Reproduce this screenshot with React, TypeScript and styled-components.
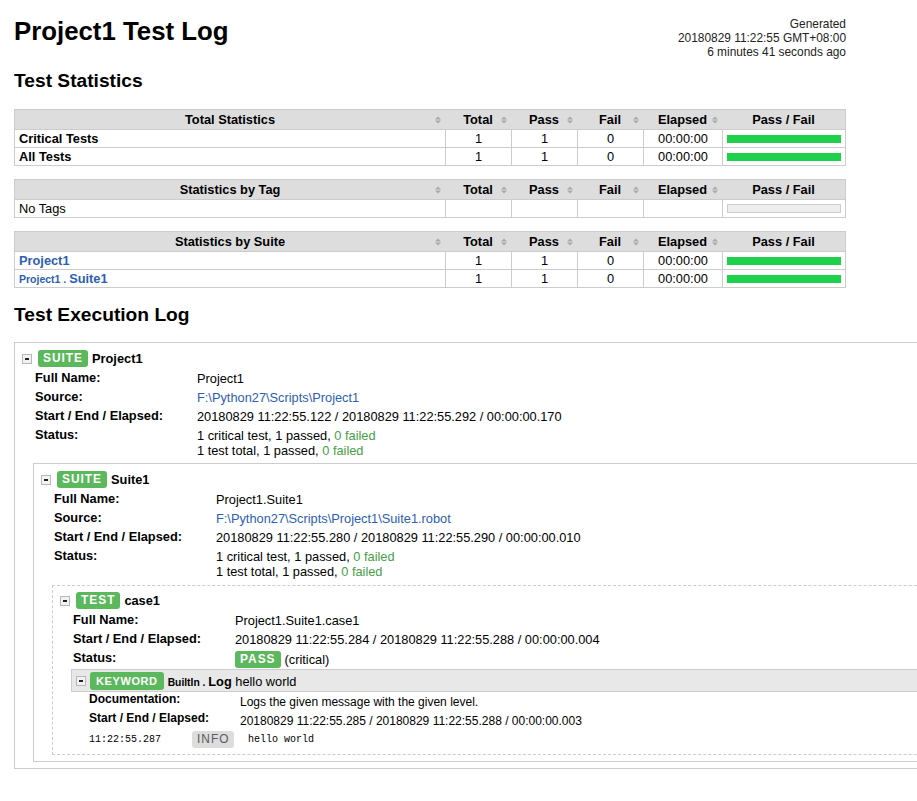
import styled, { createGlobalStyle } from "styled-components";

const GlobalStyle = createGlobalStyle`
  html, body {
    margin: 0;
    padding: 0;
    background: #fff;
    overflow-x: hidden;
  }
  body {
    font-family: "Liberation Sans", Arial, Helvetica, sans-serif;
    font-size: 12.8px;
    color: #000;
  }
`;

const COLS = "430px 66px 66px 66px 79px 123px";

const Page = styled.div`
  padding: 16px 0 0 14px;
`;

const Header = styled.header`
  width: 832px;
  display: flex;
  justify-content: space-between;
  align-items: flex-start;
`;

const Title = styled.h1`
  margin: 0;
  font-size: 25.8px;
  line-height: 30px;
  font-weight: bold;
`;

const Generated = styled.div`
  margin-top: 1px;
  text-align: right;
  font-size: 11.9px;
  line-height: 14px;
  color: #222;
`;

const SectionTitle = styled.h2<{ $top: number; $bottom: number }>`
  margin: ${(p) => p.$top}px 0 ${(p) => p.$bottom}px;
  font-size: 19.2px;
  line-height: 22px;
  font-weight: bold;
`;

/* ---------- statistics tables ---------- */

const StatTable = styled.div<{ $last?: boolean }>`
  width: 832px;
  box-sizing: border-box;
  border: 1px solid #ccc;
  margin-bottom: ${(p) => (p.$last ? 0 : 13)}px;
`;

const HeadRow = styled.div`
  display: grid;
  grid-template-columns: ${COLS};
  height: 19px;
  background: #ddd;
`;

const HeadCell = styled.div`
  display: grid;
  grid-template-columns: 10px 1fr 10px;
  align-items: center;
  padding: 0 4px;
  font-weight: bold;
  line-height: 19px;
  white-space: nowrap;
`;

const HeadText = styled.span`
  grid-column: 2;
  text-align: center;
`;

const SortIcon = styled.svg`
  grid-column: 3;
  justify-self: end;
  width: 6px;
  height: 8px;
`;

const Row = styled.div`
  display: grid;
  grid-template-columns: ${COLS};
  height: 18px;
  box-sizing: border-box;
  border-top: 1px solid #ccc;
`;

const Cell = styled.div<{ $name?: boolean; $bold?: boolean }>`
  padding: 0 4px;
  line-height: 17px;
  text-align: ${(p) => (p.$name ? "left" : "center")};
  font-weight: ${(p) => (p.$bold ? "bold" : "normal")};
  border-left: ${(p) => (p.$name ? "none" : "1px solid #ccc")};
  white-space: nowrap;
  overflow: hidden;
`;

const BarCell = styled(Cell)`
  display: flex;
  align-items: center;
`;

const PassBar = styled.div<{ $empty?: boolean }>`
  flex: 1;
  box-sizing: border-box;
  height: ${(p) => (p.$empty ? 9 : 8)}px;
  background: ${(p) => (p.$empty ? "#eee" : "#1fd04a")};
  border: ${(p) => (p.$empty ? "1px solid #ccc" : "none")};
`;

const Link = styled.a`
  color: #2d5eb3;
  text-decoration: none;
  font-weight: bold;
`;

const Parent = styled.span<{ $size?: number }>`
  font-size: ${(p) => p.$size ?? 10.5}px;
  font-weight: bold;
`;

/* ---------- execution log ---------- */

const LogArea = styled.div`
  width: 1100px;
`;

const ElementBox = styled.div<{ $dashed?: boolean; $gap?: number }>`
  border: 1px ${(p) => (p.$dashed ? "dashed" : "solid")} #ccc;
  margin-top: ${(p) => p.$gap ?? 0}px;
  padding-bottom: 6px;
`;

const ElementHeader = styled.div<{ $padTop: number }>`
  display: flex;
  align-items: center;
  padding: ${(p) => p.$padTop}px 0 1px 7px;
`;

const ElementBody = styled.div`
  padding-left: 18px;
`;

const Toggle = styled.span<{ $gap: number }>`
  position: relative;
  display: inline-block;
  box-sizing: border-box;
  width: 10px;
  height: 10px;
  margin-right: ${(p) => p.$gap}px;
  border: 1px solid #b8b8b8;
  background: #f2f2f2;
  &::after {
    content: "";
    position: absolute;
    left: 2px;
    top: 3px;
    width: 4px;
    height: 2px;
    background: #222;
  }
`;

const Label = styled.span<{ $tone?: "pass" | "info"; $small?: boolean }>`
  display: inline-block;
  height: ${(p) => (p.$small ? 18 : 17)}px;
  line-height: ${(p) => (p.$small ? 18 : 17)}px;
  padding: 0 ${(p) => (p.$small ? 6 : 5)}px;
  border-radius: 3px;
  background: ${(p) => (p.$tone === "info" ? "#ddd" : "#5cb85c")};
  color: ${(p) => (p.$tone === "info" ? "#5a5a5a" : "#fff")};
  font-weight: ${(p) => (p.$tone === "info" ? "normal" : "bold")};
  font-size: ${(p) => (p.$small ? 11 : 11.9)}px;
  letter-spacing: ${(p) => (p.$small ? 0.6 : 1)}px;
  white-space: nowrap;
`;

const ElementName = styled.span`
  margin-left: 4px;
  font-weight: bold;
  white-space: nowrap;
`;

const Args = styled.span`
  font-weight: normal;
`;

const Meta = styled.div`
  margin-left: 2px;
`;

const MetaRow = styled.div<{ $labelWidth: number; $minHeight: number }>`
  display: grid;
  grid-template-columns: ${(p) => p.$labelWidth}px 1fr;
  min-height: ${(p) => p.$minHeight}px;
`;

const MetaLabel = styled.div<{ $padTop: number; $lh: number }>`
  padding-top: ${(p) => p.$padTop}px;
  line-height: ${(p) => p.$lh}px;
  font-weight: bold;
  white-space: nowrap;
`;

const MetaValue = styled.div<{ $padTop: number; $lh: number }>`
  padding-top: ${(p) => p.$padTop}px;
  line-height: ${(p) => p.$lh}px;
  white-space: nowrap;
`;

const StatusValue = styled.div`
  padding: 3px 0 1px;
  display: flex;
  align-items: center;
  gap: 4px;
`;

const Failed = styled.span`
  color: #46a046;
`;

const SourceLink = styled.a`
  color: #2d5eb3;
  text-decoration: none;
`;

const KeywordHeader = styled.div`
  display: flex;
  align-items: center;
  padding: 2px 0 1px 4px;
  background: #e8e8e8;
  border: 1px solid #ccc;
`;

const KeywordBody = styled.div`
  padding-left: 18px;
  font-size: 12px;
`;

const MessageRow = styled.div`
  display: grid;
  grid-template-columns: 103px 56px 1fr;
  align-items: center;
  height: 18px;
`;

const Mono = styled.span`
  font-family: "Liberation Mono", "DejaVu Sans Mono", monospace;
  font-size: 10px;
`;

const InfoCell = styled.div`
  justify-self: start;
`;

const Sort = () => (
  <SortIcon viewBox="0 0 6 8">
    <polygon points="0,3.4 3,0.4 6,3.4" fill="#a9a9a9" />
    <polygon points="0,4.6 3,7.6 6,4.6" fill="#a9a9a9" />
  </SortIcon>
);

const TableHead = ({ title }: { title: string }) => (
  <HeadRow>
    <HeadCell>
      <HeadText>{title}</HeadText>
      <Sort />
    </HeadCell>
    {["Total", "Pass", "Fail", "Elapsed"].map((h) => (
      <HeadCell key={h}>
        <HeadText>{h}</HeadText>
        <Sort />
      </HeadCell>
    ))}
    <HeadCell>
      <HeadText>Pass / Fail</HeadText>
    </HeadCell>
  </HeadRow>
);

const StatLine = ({ name, bold }: { name: React.ReactNode; bold?: boolean }) => (
  <Row>
    <Cell $name $bold={bold}>
      {name}
    </Cell>
    <Cell>1</Cell>
    <Cell>1</Cell>
    <Cell>0</Cell>
    <Cell>00:00:00</Cell>
    <BarCell>
      <PassBar />
    </BarCell>
  </Row>
);

const SuiteMeta = ({
  fullName,
  source,
  times,
}: {
  fullName: string;
  source?: string;
  times: string;
}) => (
  <Meta>
    <MetaRow $labelWidth={162} $minHeight={19}>
      <MetaLabel $padTop={2} $lh={15}>Full Name:</MetaLabel>
      <MetaValue $padTop={4} $lh={14.5}>{fullName}</MetaValue>
    </MetaRow>
    {source && (
      <MetaRow $labelWidth={162} $minHeight={19}>
        <MetaLabel $padTop={2} $lh={15}>Source:</MetaLabel>
        <MetaValue $padTop={4} $lh={14.5}>
          <SourceLink>{source}</SourceLink>
        </MetaValue>
      </MetaRow>
    )}
    <MetaRow $labelWidth={162} $minHeight={19}>
      <MetaLabel $padTop={2} $lh={15}>Start / End / Elapsed:</MetaLabel>
      <MetaValue $padTop={4} $lh={14.5}>{times}</MetaValue>
    </MetaRow>
    <MetaRow $labelWidth={162} $minHeight={19}>
      <MetaLabel $padTop={2} $lh={15}>Status:</MetaLabel>
      <MetaValue $padTop={4} $lh={14.5}>
        1 critical test, 1 passed, <Failed>0 failed</Failed>
        <br />
        1 test total, 1 passed, <Failed>0 failed</Failed>
      </MetaValue>
    </MetaRow>
  </Meta>
);

export default function App() {
  return (
    <>
      <GlobalStyle />
      <Page>
        <Header>
          <Title>Project1 Test Log</Title>
          <Generated>
            Generated
            <br />
            20180829 11:22:55 GMT+08:00
            <br />6 minutes 41 seconds ago
          </Generated>
        </Header>

        <SectionTitle $top={11} $bottom={17}>
          Test Statistics
        </SectionTitle>

        <StatTable>
          <TableHead title="Total Statistics" />
          <StatLine name="Critical Tests" bold />
          <StatLine name="All Tests" bold />
        </StatTable>

        <StatTable>
          <TableHead title="Statistics by Tag" />
          <Row>
            <Cell $name>No Tags</Cell>
            <Cell />
            <Cell />
            <Cell />
            <Cell />
            <BarCell>
              <PassBar $empty />
            </BarCell>
          </Row>
        </StatTable>

        <StatTable $last>
          <TableHead title="Statistics by Suite" />
          <StatLine name={<Link>Project1</Link>} />
          <StatLine
            name={
              <Link>
                <Parent>Project1 . </Parent>Suite1
              </Link>
            }
          />
        </StatTable>

        <SectionTitle $top={16} $bottom={16}>
          Test Execution Log
        </SectionTitle>

        <LogArea>
          <ElementBox>
            <ElementHeader $padTop={7}>
              <Toggle $gap={6} />
              <Label>SUITE</Label>
              <ElementName>Project1</ElementName>
            </ElementHeader>
            <ElementBody>
              <SuiteMeta
                fullName="Project1"
                source="F:\Python27\Scripts\Project1"
                times="20180829 11:22:55.122 / 20180829 11:22:55.292 / 00:00:00.170"
              />

              <ElementBox $gap={5}>
                <ElementHeader $padTop={7}>
                  <Toggle $gap={6} />
                  <Label>SUITE</Label>
                  <ElementName>Suite1</ElementName>
                </ElementHeader>
                <ElementBody>
                  <SuiteMeta
                    fullName="Project1.Suite1"
                    source="F:\Python27\Scripts\Project1\Suite1.robot"
                    times="20180829 11:22:55.280 / 20180829 11:22:55.290 / 00:00:00.010"
                  />

                  <ElementBox $dashed $gap={6}>
                    <ElementHeader $padTop={6}>
                      <Toggle $gap={6} />
                      <Label>TEST</Label>
                      <ElementName>case1</ElementName>
                    </ElementHeader>
                    <ElementBody>
                      <Meta>
                        <MetaRow $labelWidth={162} $minHeight={19}>
                          <MetaLabel $padTop={2} $lh={15}>Full Name:</MetaLabel>
                          <MetaValue $padTop={4} $lh={14.5}>
                            Project1.Suite1.case1
                          </MetaValue>
                        </MetaRow>
                        <MetaRow $labelWidth={162} $minHeight={19}>
                          <MetaLabel $padTop={2} $lh={15}>
                            Start / End / Elapsed:
                          </MetaLabel>
                          <MetaValue $padTop={4} $lh={14.5}>
                            20180829 11:22:55.284 / 20180829 11:22:55.288 / 00:00:00.004
                          </MetaValue>
                        </MetaRow>
                        <MetaRow $labelWidth={162} $minHeight={19}>
                          <MetaLabel $padTop={2} $lh={15}>Status:</MetaLabel>
                          <StatusValue>
                            <Label $tone="pass">PASS</Label>
                            <span>(critical)</span>
                          </StatusValue>
                        </MetaRow>
                      </Meta>

                      <KeywordHeader>
                        <Toggle $gap={4} />
                        <Label $small>KEYWORD</Label>
                        <ElementName>
                          <Parent $size={10.3}>BuiltIn . </Parent>Log{" "}
                          <Args>hello world</Args>
                        </ElementName>
                      </KeywordHeader>
                      <KeywordBody>
                        <MetaRow $labelWidth={151} $minHeight={19}>
                          <MetaLabel $padTop={0} $lh={14}>Documentation:</MetaLabel>
                          <MetaValue $padTop={3} $lh={14}>
                            Logs the given message with the given level.
                          </MetaValue>
                        </MetaRow>
                        <MetaRow $labelWidth={151} $minHeight={19}>
                          <MetaLabel $padTop={0} $lh={14}>
                            Start / End / Elapsed:
                          </MetaLabel>
                          <MetaValue $padTop={3} $lh={14}>
                            20180829 11:22:55.285 / 20180829 11:22:55.288 / 00:00:00.003
                          </MetaValue>
                        </MetaRow>
                        <MessageRow>
                          <Mono>11:22:55.287</Mono>
                          <InfoCell>
                            <Label $tone="info">INFO</Label>
                          </InfoCell>
                          <Mono>hello world</Mono>
                        </MessageRow>
                      </KeywordBody>
                    </ElementBody>
                  </ElementBox>
                </ElementBody>
              </ElementBox>
            </ElementBody>
          </ElementBox>
        </LogArea>
      </Page>
    </>
  );
}
